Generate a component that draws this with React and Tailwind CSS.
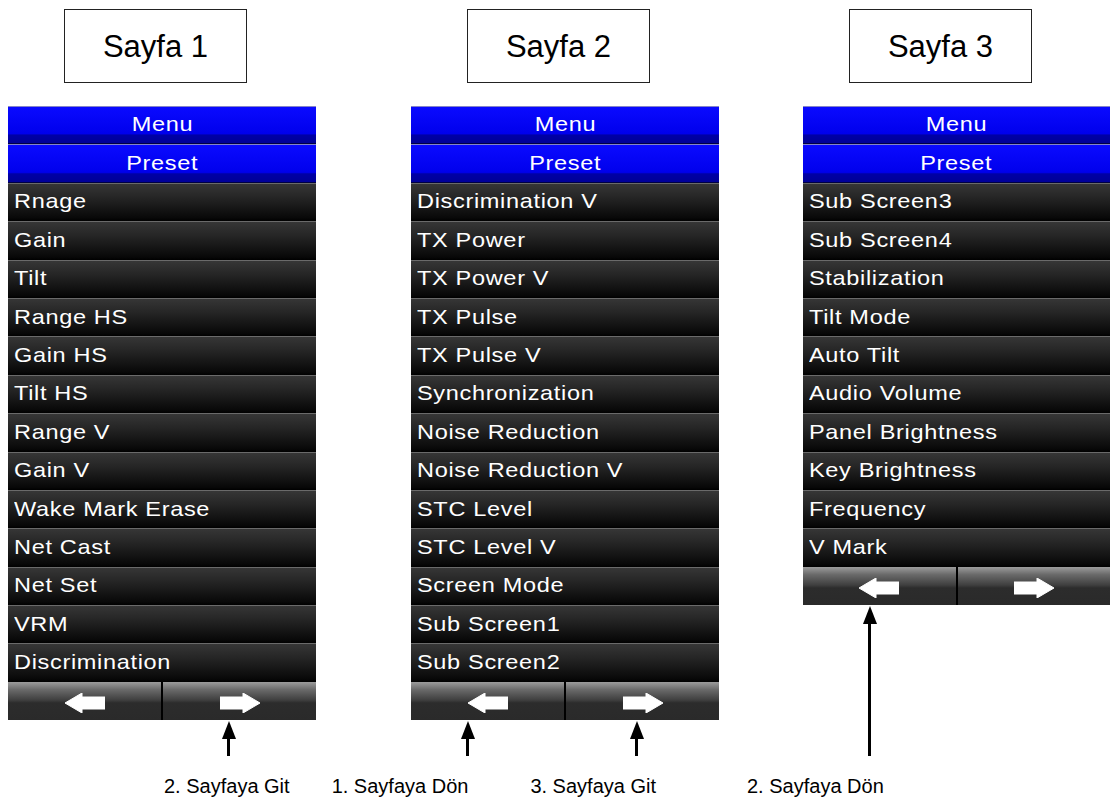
import React from "react";

const pages = [
  {
    title: "Sayfa 1",
    col: "ml-[8px] w-[308px]",
    box: "ml-[56px]",
    items: [
      "Rnage",
      "Gain",
      "Tilt",
      "Range HS",
      "Gain HS",
      "Tilt HS",
      "Range V",
      "Gain V",
      "Wake Mark Erase",
      "Net Cast",
      "Net Set",
      "VRM",
      "Discrimination",
    ],
    arrows: ["ml-[213px]"],
  },
  {
    title: "Sayfa 2",
    col: "ml-[95px] w-[308px]",
    box: "ml-[56px]",
    items: [
      "Discrimination V",
      "TX Power",
      "TX Power V",
      "TX Pulse",
      "TX Pulse V",
      "Synchronization",
      "Noise Reduction",
      "Noise Reduction V",
      "STC Level",
      "STC Level V",
      "Screen Mode",
      "Sub Screen1",
      "Sub Screen2",
    ],
    arrows: ["ml-[49px]", "ml-[154px]"],
  },
  {
    title: "Sayfa 3",
    col: "ml-[84px] w-[307px]",
    box: "ml-[46px]",
    items: [
      "Sub Screen3",
      "Sub Screen4",
      "Stabilization",
      "Tilt Mode",
      "Auto Tilt",
      "Audio Volume",
      "Panel Brightness",
      "Key Brightness",
      "Frequency",
      "V Mark",
    ],
    arrows: ["ml-[59px]"],
  },
];

// etiketler: ok altindaki aciklamalar
const labels = [
  { text: "2. Sayfaya Git", cls: "ml-[164px]" },
  { text: "1. Sayfaya Dön", cls: "ml-[42px]" },
  { text: "3. Sayfaya Git", cls: "ml-[62px]" },
  { text: "2. Sayfaya Dön", cls: "ml-[91px]" },
];

function BlueRow({ children }) {
  return (
    <div className="h-[38.4px] border-t border-[#8484c8] bg-[linear-gradient(to_bottom,#0a0aff_0%,#0000ec_72%,#0000a6_76%,#000098_97%,#000000_100%)] flex items-center justify-center pb-[4px]">
      <span className="text-white text-[21px] tracking-[0.6px] leading-none scale-x-[1.12]">{children}</span>
    </div>
  );
}

function ItemRow({ children }) {
  return (
    <div className="h-[38.4px] border-t border-[#6a6a6a] bg-[linear-gradient(to_bottom,#363636_0%,#262626_35%,#080808_92%,#000000_100%)] flex items-center pl-[6px] pb-[3px]">
      <span className="text-white text-[21px] tracking-[0.6px] leading-none whitespace-nowrap origin-left scale-x-[1.12]">
        {children}
      </span>
    </div>
  );
}

function NavArrow({ dir }) {
  return (
    <svg width="40" height="20" viewBox="0 0 40 20">
      {dir === "left" ? (
        <polygon points="0,10 17,0 17,4 40,4 40,16 17,16 17,20" fill="#fff" strokeLinejoin="round" stroke="#fff" strokeWidth="1" />
      ) : (
        <polygon points="40,10 23,0 23,4 0,4 0,16 23,16 23,20" fill="#fff" strokeLinejoin="round" stroke="#fff" strokeWidth="1" />
      )}
    </svg>
  );
}

function NavRow() {
  const half =
    "flex-1 flex items-center justify-center pt-[4px] bg-[linear-gradient(to_bottom,#9c9c9c_0%,#6a6a6a_20%,#3e3e3e_48%,#2c2c2c_55%,#2a2a2a_100%)]";
  return (
    <div className="h-[38px] flex">
      <div className={half}>
        <NavArrow dir="left" />
      </div>
      <div className="w-[2px] bg-black" />
      <div className={half}>
        <NavArrow dir="right" />
      </div>
    </div>
  );
}

function UpArrow({ cls }) {
  return (
    <div className={`${cls} w-[15px] flex flex-col items-center pt-[1px]`}>
      <div className="w-0 h-0 border-l-[7.5px] border-r-[7.5px] border-b-[18px] border-l-transparent border-r-transparent border-b-black" />
      <div className="flex-1 w-[3px] bg-black" />
    </div>
  );
}

function Column({ page }) {
  return (
    <div className={`${page.col} flex flex-col`}>
      <div className="h-[106px] pt-[9px]">
        <div
          className={`${page.box} w-[183px] h-[74px] border-[1.5px] border-[#222] flex items-center justify-center`}
        >
          <span className="text-[31px] text-black leading-none">{page.title}</span>
        </div>
      </div>
      <div className="flex flex-col">
        <BlueRow>Menu</BlueRow>
        <BlueRow>Preset</BlueRow>
        {page.items.map((item, i) => (
          <ItemRow key={i}>{item}</ItemRow>
        ))}
        <NavRow />
      </div>
      <div className="flex-1 flex">
        {page.arrows.map((a, i) => (
          <UpArrow key={i} cls={a} />
        ))}
      </div>
    </div>
  );
}

export default function App() {
  return (
    <div className="w-[1110px] h-[806px] bg-white overflow-hidden flex flex-col font-['Liberation_Sans',Arial,sans-serif]">
      <div className="h-[756px] flex">
        {pages.map((p, i) => (
          <Column key={i} page={p} />
        ))}
      </div>
      <div className="flex-1 flex pt-[19px]">
        {labels.map((l, i) => (
          <span key={i} className={`${l.cls} text-[20px] leading-[23px] text-black whitespace-nowrap`}>
            {l.text}
          </span>
        ))}
      </div>
    </div>
  );
}
